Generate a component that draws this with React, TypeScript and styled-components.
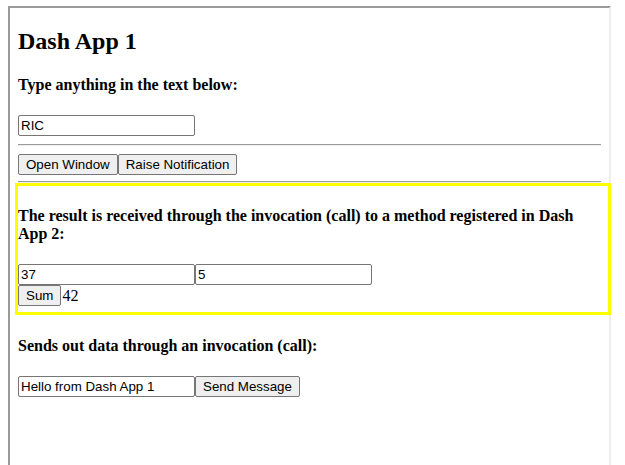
import styled, { createGlobalStyle } from "styled-components";

const GlobalStyle = createGlobalStyle`
  html, body {
    margin: 0;
    padding: 0;
    background: #ffffff;
    overflow: hidden;
  }
  body {
    font-family: "Liberation Serif", "Times New Roman", serif;
    color: #000000;
  }
`;

const Frame = styled.div`
  margin: 6px 0 0 8px;
  width: 599px;
  height: 480px;
  border-style: solid;
  border-width: 2px;
  border-color: #9a9a9a #eeeeee #eeeeee #9a9a9a;
`;

const Page = styled.div`
  margin: 8px;
`;

const Title = styled.h2`
  font-size: 24px;
  font-weight: 700;
  margin: 20px 0;
`;

const Label = styled.h4`
  font-size: 16px;
  font-weight: 700;
  margin: 21px 0;
`;

const Row = styled.div<{ $pad?: number }>`
  display: flex;
  align-items: center;
  padding-bottom: ${(p) => p.$pad ?? 0}px;
`;

const TextInput = styled.input`
  box-sizing: border-box;
  width: 177px;
  height: 21px;
  margin: 0;
  padding: 1px 2px;
  border: 1px solid #767676;
  border-radius: 2px;
  font: 13.333px "Liberation Sans", Arial, sans-serif;
  color: #000000;
  background: #ffffff;
`;

const Button = styled.button`
  box-sizing: border-box;
  height: 21px;
  margin: 0;
  padding: 1px 7px;
  border: 1px solid #767676;
  border-radius: 2px;
  background: #efefef;
  font: 13.333px "Liberation Sans", Arial, sans-serif;
  color: #000000;
`;

const Rule = styled.hr<{ $tight?: boolean }>`
  height: 0;
  margin: ${(p) => (p.$tight ? "6px 0 0" : "8px 0")};
  border: 0;
  border-top: 1px solid #9a9a9a;
  border-bottom: 1px solid #eeeeee;
`;

const Highlight = styled.div`
  margin: 0 -10px 22px -3px;
  padding-right: 10px;
  border: 3px solid #ffff00;
  position: relative;
`;

const Result = styled.span`
  font-size: 16px;
  margin-left: 1px;
`;

export default function App() {
  return (
    <>
      <GlobalStyle />
      <Frame>
        <Page>
          <Title>Dash App 1</Title>
          <Label>Type anything in the text below:</Label>
          <Row>
            <TextInput defaultValue="RIC" />
          </Row>
          <Rule />
          <Row>
            <Button>Open Window</Button>
            <Button>Raise Notification</Button>
          </Row>
          <Rule $tight />
          <Highlight>
            <Label>
              The result is received through the invocation (call) to a method
              registered in Dash App 2:
            </Label>
            <Row>
              <TextInput defaultValue="37" />
              <TextInput defaultValue="5" />
            </Row>
            <Row $pad={6}>
              <Button>Sum</Button>
              <Result>42</Result>
            </Row>
          </Highlight>
          <Label>Sends out data through an invocation (call):</Label>
          <Row>
            <TextInput defaultValue="Hello from Dash App 1" />
            <Button>Send Message</Button>
          </Row>
        </Page>
      </Frame>
    </>
  );
}
